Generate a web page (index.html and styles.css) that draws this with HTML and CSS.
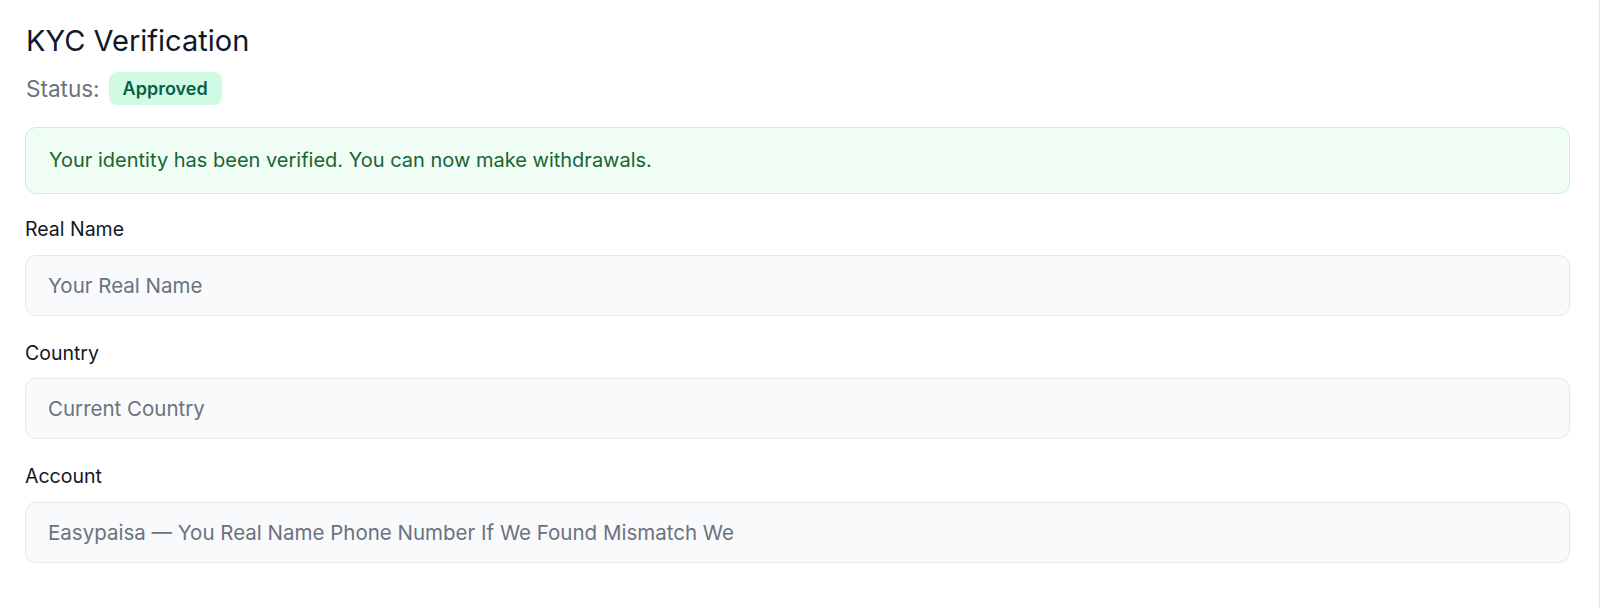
FILE: index.html
```html
<!DOCTYPE html>
<html lang="en">
<head>
    <meta charset="UTF-8">
    <meta name="viewport" content="width=device-width, initial-scale=1.0">
    <title>KYC Verification</title>
    <link rel="stylesheet" href="styles.css">
</head>
<body>
    <div class="kyc-card">
        <h2 class="kyc-title">KYC Verification</h2>
        <div class="status-row">
            <span class="status-label">Status:</span>
            <span class="badge badge-approved">Approved</span>
        </div>

        <div class="alert alert-success">
            Your identity has been verified. You can now make withdrawals.
        </div>

        <form class="kyc-form">
            <div class="field">
                <label for="real-name">Real Name</label>
                <input type="text" id="real-name" class="text-box" placeholder="Your Real Name" disabled>
            </div>
            <div class="field">
                <label for="country">Country</label>
                <input type="text" id="country" class="text-box" placeholder="Current Country" disabled>
            </div>
            <div class="field">
                <label for="account">Account</label>
                <input type="text" id="account" class="text-box" placeholder="Easypaisa — You Real Name Phone Number If We Found Mismatch We" disabled>
            </div>
        </form>
    </div>
</body>
</html>
```

FILE: styles.css
```css
html, body {
    margin: 0;
    padding: 0;
    background-color: #ffffff;
}
body {
    font-family: Inter, "Noto Sans", Arial, sans-serif;
    color: #111827;
}
.kyc-card {
    box-sizing: border-box;
    min-height: 608px;
    padding: 22px 29px 22px 25px;
    background-color: #fff;
    border-right: 1px solid #e5e7eb;
}
.kyc-title {
    margin: 0 0 0 1px;
    font-size: 29px;
    line-height: 38.5px;
    font-weight: 400;
    color: #111827;
}
.status-row {
    display: flex;
    align-items: center;
    gap: 9px;
    margin-top: 11px;
    padding-left: 1px;
}
.status-label {
    font-size: 22.5px;
    line-height: 33px;
    color: #6b7280;
}
.badge {
    display: inline-flex;
    align-items: center;
    height: 33px;
    padding: 0 14px;
    border-radius: 8px;
    font-size: 18px;
    font-weight: 600;
}
.badge-approved {
    background-color: #d1fae5;
    color: #065f46;
}
.alert {
    margin-top: 22px;
    padding: 19px 23px;
    border-radius: 11px;
    font-size: 20px;
    line-height: 27.5px;
}
.alert-success {
    background-color: #f0fdf4;
    border: 1px solid #bbf7d0;
    color: #166534;
}
.kyc-form {
    display: flex;
    flex-direction: column;
    gap: 24px;
    margin-top: 22px;
}
.field {
    display: flex;
    flex-direction: column;
    gap: 11px;
}
.field label {
    font-size: 19.5px;
    line-height: 27.5px;
    font-weight: 400;
    color: #111827;
}
.text-box {
    box-sizing: border-box;
    width: 100%;
    height: 61px;
    padding: 0 22px;
    border: 1px solid #e5e7eb;
    border-radius: 11px;
    background-color: #f9fafb;
    font-family: inherit;
    font-size: 20.5px;
    color: #374151;
    outline: none;
}
.text-box::placeholder {
    color: #6b7280;
    opacity: 1;
}
```
